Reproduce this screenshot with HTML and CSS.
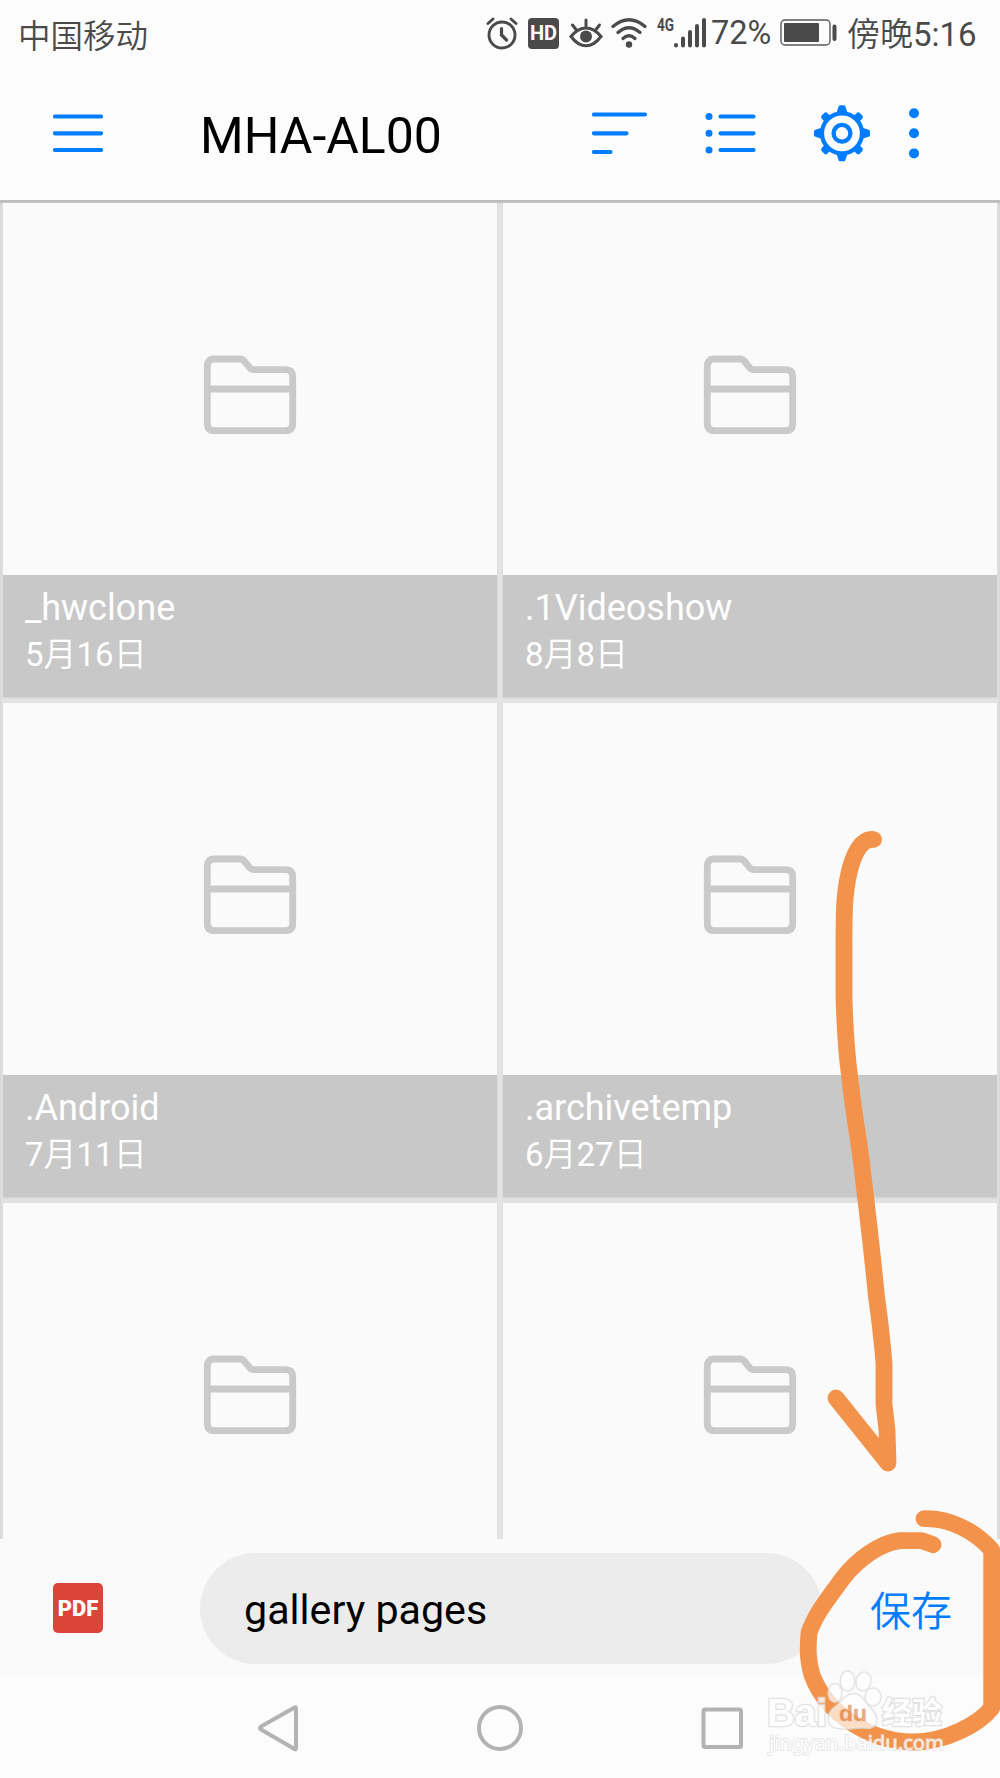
FILE: index.html
```html
<!DOCTYPE html>
<html lang="zh-CN">
<head>
    <meta charset="UTF-8">
    <meta name="viewport" content="width=device-width, initial-scale=1.0">
    <title>MHA-AL00</title>
    <link rel="stylesheet" href="styles.css">
</head>
<body>
    <!-- Shared folder icon -->
    <svg class="defs" width="0" height="0">
        <symbol id="folder" viewBox="0 0 94 80">
            <path d="M11 4H37.500Q39.500 4 41 5.800L46.500 12.500Q48.500 14.700 51 14.700H82.500Q89.700 14.700 89.700 21.500V68.500Q89.700 75.700 82.500 75.700H11.500Q4.300 75.700 4.300 68.500V11Q4.300 4 11 4ZM4.300 34H89.700" fill="none" stroke="#cacaca" stroke-width="6.800"/>
        </symbol>
    </svg>

    <div class="screen">
        <div class="status-bar">
            <span class="carrier">中国移动</span>
            <div class="status-icons">
                <svg class="alarm" width="32" height="34" viewBox="0 0 32 34" fill="none" stroke="#4a4a4a" stroke-width="2.900" stroke-linecap="round">
                    <circle cx="16" cy="19" r="13"/>
                    <path d="M2 7.500 7 3M30 7.500 25 3"/>
                    <path d="M15.500 12.500V19L20.500 24" stroke-width="3.200"/>
                </svg>
                <span class="hd">HD</span>
                <svg class="eye" width="34" height="34" viewBox="0 0 34 34" fill="none" stroke="#4a4a4a" stroke-width="3" stroke-linecap="round">
                    <path d="M2 20.500Q9 12 17 12T32 20.500Q25 29.800 17 29.800T2 20.500ZM17 4V10M3.500 9 7 13.500M30.500 9 27 13.500"/>
                    <circle cx="17" cy="20.500" r="6" fill="#4a4a4a" stroke="none"/>
                </svg>
                <svg class="wifi" width="38" height="34" viewBox="0 0 38 34" fill="none" stroke="#4a4a4a" stroke-width="3.200" stroke-linecap="round">
                    <path d="M3 10.500Q19-3 35 10.500M8 16.500Q19 7 30 16.500M13 22.500Q19 17 25 22.500"/>
                    <circle cx="19" cy="28.500" r="3.200" fill="#4a4a4a" stroke="none"/>
                </svg>
                <svg class="signal" width="50" height="34" viewBox="0 0 50 34">
                    <text x="0" y="15" class="net" textLength="17" lengthAdjust="spacingAndGlyphs">4G</text>
                    <path d="M19 29V29.500M26 22.500V29.500M33 16V29.500M40 10V29.500M47 4V29.500" stroke="#4a4a4a" stroke-width="4" stroke-linecap="round"/>
                </svg>
                <span class="percent">72%</span>
                <svg class="battery" width="58" height="30" viewBox="0 0 58 30">
                    <rect x="1" y="2" width="49" height="25" rx="4" fill="none" stroke="#5a5a5a" stroke-width="1.400"/>
                    <rect x="4" y="5" width="35" height="19" rx="1" fill="#4a4a4a"/>
                    <path d="M54.500 8.500V21" stroke="#4a4a4a" stroke-width="4" stroke-linecap="round"/>
                </svg>
                <span class="time"><span class="cn">傍晚</span>5:16</span>
            </div>
        </div>

        <div class="toolbar">
            <svg class="menu" width="50" height="60" viewBox="0 0 50 60" stroke="#007dff" stroke-width="4.200" stroke-linecap="round">
                <path d="M2 13.500H48M2 30.300H48M2 47H48"/>
            </svg>
            <h1>MHA-AL00</h1>
            <svg class="sort" width="56" height="60" viewBox="0 0 56 60" stroke="#007dff" stroke-width="4.200" stroke-linecap="round">
                <path d="M2 11.500H53M2 30.300H34.500M2 49H18.500"/>
            </svg>
            <svg class="list" width="52" height="60" viewBox="0 0 52 60" stroke="#007dff" stroke-width="4.200" stroke-linecap="round">
                <path d="M15.500 13.500H48.500M15.500 30.300H48.500M15.500 47H48.500"/>
                <path d="M4 13.500H4.010M4 30.300H4.010M4 47H4.010" stroke-width="7"/>
            </svg>
            <svg class="gear" width="58" height="60" viewBox="-29 -30.300 58 60" fill="none" stroke="#007dff">
                <circle r="20" stroke-width="4.200"/>
                <circle r="8.400" stroke-width="4.300"/>
                <g fill="#007dff" stroke="none">
                    <path id="tooth" d="M-5.500-20.500-3.500-26.500Q-3.200-28-2-28H2Q3.200-28 3.500-26.500L5.500-20.500Z"/>
                    <use href="#tooth" transform="rotate(90)"/>
                    <use href="#tooth" transform="rotate(180)"/>
                    <use href="#tooth" transform="rotate(270)"/>
                    <path id="nub" d="M-4-20V-24.500Q-4-27-1.500-27H1.500Q4-27 4-24.500V-20Z" transform="rotate(45)"/>
                    <use href="#nub" transform="rotate(90)"/>
                    <use href="#nub" transform="rotate(180)"/>
                    <use href="#nub" transform="rotate(270)"/>
                </g>
            </svg>
            <svg class="more" width="12" height="60" viewBox="0 0 12 60" fill="#007dff">
                <circle cx="6" cy="10.200" r="5"/>
                <circle cx="6" cy="30.300" r="5"/>
                <circle cx="6" cy="50.400" r="5"/>
            </svg>
        </div>

        <div class="files">
            <div class="card">
                <div class="thumb"><svg width="94" height="80"><use href="#folder"/></svg></div>
                <div class="label"><p class="name">_hwclone</p><p class="date">5<span class="cn">月</span>16<span class="cn">日</span></p></div>
            </div>
            <div class="card">
                <div class="thumb"><svg width="94" height="80"><use href="#folder"/></svg></div>
                <div class="label"><p class="name">.1Videoshow</p><p class="date">8<span class="cn">月</span>8<span class="cn">日</span></p></div>
            </div>
            <div class="card">
                <div class="thumb"><svg width="94" height="80"><use href="#folder"/></svg></div>
                <div class="label"><p class="name">.Android</p><p class="date">7<span class="cn">月</span>11<span class="cn">日</span></p></div>
            </div>
            <div class="card">
                <div class="thumb"><svg width="94" height="80"><use href="#folder"/></svg></div>
                <div class="label"><p class="name">.archivetemp</p><p class="date">6<span class="cn">月</span>27<span class="cn">日</span></p></div>
            </div>
            <div class="card">
                <div class="thumb"><svg width="94" height="80"><use href="#folder"/></svg></div>
            </div>
            <div class="card">
                <div class="thumb"><svg width="94" height="80"><use href="#folder"/></svg></div>
            </div>
        </div>

        <div class="save-bar">
            <span class="pdf">PDF</span>
            <div class="filename">gallery pages</div>
            <span class="save">保存</span>
        </div>

        <div class="nav-bar">
            <svg width="46" height="50" viewBox="0 0 46 50" fill="none" stroke="#b3b3b3" stroke-width="4" stroke-linejoin="round">
                <path d="M39.500 4.500Q41 3.500 41 5.500V45Q41 47 39.500 46L6 26.500Q4 25 6 23.500Z"/>
            </svg>
            <svg width="46" height="50" viewBox="0 0 46 50" fill="none" stroke="#b3b3b3" stroke-width="4">
                <circle cx="23" cy="25" r="21"/>
            </svg>
            <svg width="46" height="50" viewBox="0 0 46 50" fill="none" stroke="#b3b3b3" stroke-width="4">
                <rect x="4.500" y="6.500" width="37.500" height="37.500" rx="1.500"/>
            </svg>
        </div>

        <!-- Hand drawn marks and watermark -->
        <svg class="overlay" width="1000" height="1778" viewBox="0 0 1000 1778">
            <g fill="none" stroke="#f3924a" stroke-width="16.800" stroke-linecap="round" stroke-linejoin="round">
                <path d="M873.500 839.500C861 838 853 855 849 873C844 894 844 915 844 944V998C845 1030 846 1050 849.500 1075C853 1110 859 1140 862 1167C866 1200 872 1250 876.500 1297C880 1320 882 1340 884 1363V1404L887 1430L888 1463L836 1398"/>
                <path d="M924 1518.700C950 1518 975 1531 991.700 1550V1708C980 1723 947 1742 913 1742C870 1742 826 1713 812 1675C807 1657 808 1647 809 1633C815 1614 830 1596 843 1578C858 1559 880 1543 900 1540.700H921.700L933 1544.700"/>
            </g>
            <g class="watermark">
                <g class="paw">
                    <ellipse cx="835" cy="1693" rx="6.500" ry="9"/>
                    <ellipse cx="847.500" cy="1681" rx="6.800" ry="9.500"/>
                    <ellipse cx="863.500" cy="1681.500" rx="7" ry="9" transform="rotate(12 863.500 1681.500)"/>
                    <ellipse cx="873" cy="1697" rx="7.500" ry="8.500"/>
                    <path d="M854 1694C845 1694 842 1703 834 1708C825 1716 828 1728 839 1728C849 1730 860 1726 869 1728C880 1726 877 1714 870 1708C864 1702 862 1694 854 1694Z"/>
                </g>
                <text x="767" y="1726" class="brand" textLength="60" lengthAdjust="spacingAndGlyphs">Bai</text>
                <text x="839" y="1721" class="du" textLength="28" lengthAdjust="spacingAndGlyphs">du</text>
                <text x="882" y="1723" class="brand-cn" textLength="60" lengthAdjust="spacingAndGlyphs">经验</text>
                <text x="769" y="1750" class="site" textLength="175" lengthAdjust="spacingAndGlyphs">jingyan.baidu.com</text>
            </g>
        </svg>
    </div>
</body>
</html>
```
FILE: styles.css
```css
* {
    box-sizing: border-box;
}
body {
    margin: 0;
    background-color: #fcfcfc;
    font-family: Roboto, "Noto Sans CJK SC", sans-serif;
}
svg {
    display: block;
    flex: none;
}
.defs {
    position: absolute;
}
.screen {
    position: relative;
    display: flex;
    flex-direction: column;
    width: 1000px;
    height: 1778px;
    overflow: hidden;
}
.cn {
    font-weight: 350;
}

/* Status bar */
.status-bar {
    display: flex;
    justify-content: space-between;
    height: 66px;
    padding: 0 22px 0 18px;
    color: #4a4a4a;
    font-size: 33px;
    line-height: 68px;
    white-space: nowrap;
}
.carrier {
    font-family: "Noto Sans CJK SC", sans-serif;
    font-size: 32.500px;
    font-weight: 350;
}
.status-icons {
    display: flex;
    align-items: center;
}
.hd {
    width: 31px;
    height: 31px;
    margin: 1px 10px 0 10px;
    border-radius: 4px;
    background-color: #4a4a4a;
    color: #fcfcfc;
    font-size: 20px;
    font-weight: bold;
    line-height: 31px;
    text-align: center;
}
.wifi {
    margin: 0 9px 0 7px;
}
.net {
    font-size: 18px;
    font-weight: bold;
    fill: #4a4a4a;
}
.percent {
    width: 70px;
    padding-left: 4px;
    font-size: 32.500px;
    line-height: 64px;
}
.battery {
    margin-right: 9px;
    margin-left: 3px;
}
.time {
    width: 131px;
    padding-top: 4px;
}

/* Toolbar */
.toolbar {
    display: flex;
    align-items: center;
    height: 134px;
    padding: 0 80px 0 53px;
}
h1 {
    margin: 6px auto 0 97px;
    color: #000;
    font-size: 50px;
    font-weight: normal;
}
.sort {
    margin-right: 57px;
}
.list {
    margin-right: 56px;
}
.gear {
    margin-right: 37px;
}

/* Folder grid */
.files {
    display: grid;
    grid-template-columns: 1fr 1fr;
    grid-auto-rows: 494px;
    gap: 6px;
    height: 1339px;
    padding: 3px;
    overflow: hidden;
    background-color: #e3e3e3;
    box-shadow: inset 0 3px 2px #bcbcbc;
}
.card {
    display: flex;
    flex-direction: column;
    background-color: #fafafa;
    box-shadow: 0 1px 2px #cfcfcf;
}
.thumb {
    display: flex;
    align-items: center;
    justify-content: center;
    height: 372px;
    padding-top: 12px;
}
.label {
    flex: 1;
    padding: 10px 22px;
    background-color: #c8c8c8;
    color: #fff;
}
.name, .date {
    margin: 0;
}
.name {
    font-size: 36px;
    line-height: 46px;
}
.date {
    font-size: 33px;
    line-height: 48px;
}

/* Save bar */
.save-bar {
    display: flex;
    align-items: center;
    height: 139px;
    background-color: #fafafa;
}
.pdf {
    width: 50px;
    height: 50px;
    margin: 0 97px 1px 53px;
    border-radius: 5px;
    background-color: #db4437;
    color: #fff;
    font-size: 22px;
    font-weight: 900;
    line-height: 51px;
    text-align: center;
}
.filename {
    width: 622px;
    height: 111px;
    padding-left: 44px;
    border-radius: 56px;
    background-color: #ececec;
    color: #000;
    font-size: 41.200px;
    line-height: 115px;
}
.save {
    margin: 0 0 2px 48px;
    color: #007dff;
    font-size: 41px;
    font-weight: 350;
}

/* System navigation */
.nav-bar {
    display: flex;
    justify-content: center;
    gap: 176px;
    height: 100px;
    padding-top: 25px;
    background-color: #fcfcfc;
}

/* Overlay */
.overlay {
    position: absolute;
    top: 0;
    left: 0;
}
.watermark {
    fill: #fff;
    stroke: #dcdcdc;
    stroke-width: 2.500px;
    paint-order: stroke;
    opacity: 0.8;
}
.paw {
    fill-opacity: 0.85;
}
.brand {
    font-family: "Liberation Sans", sans-serif;
    font-size: 38px;
    font-weight: bold;
}
.du {
    font-family: "Liberation Sans", sans-serif;
    font-size: 22px;
    font-weight: bold;
    fill: #e9965f;
    stroke: #ddd;
    stroke-width: 1px;
}
.brand-cn {
    font-family: "Noto Sans CJK SC", sans-serif;
    font-size: 30px;
    font-weight: bold;
}
.site {
    font-family: "Noto Sans", sans-serif;
    font-size: 20px;
    stroke-width: 1.500px;
}
```
